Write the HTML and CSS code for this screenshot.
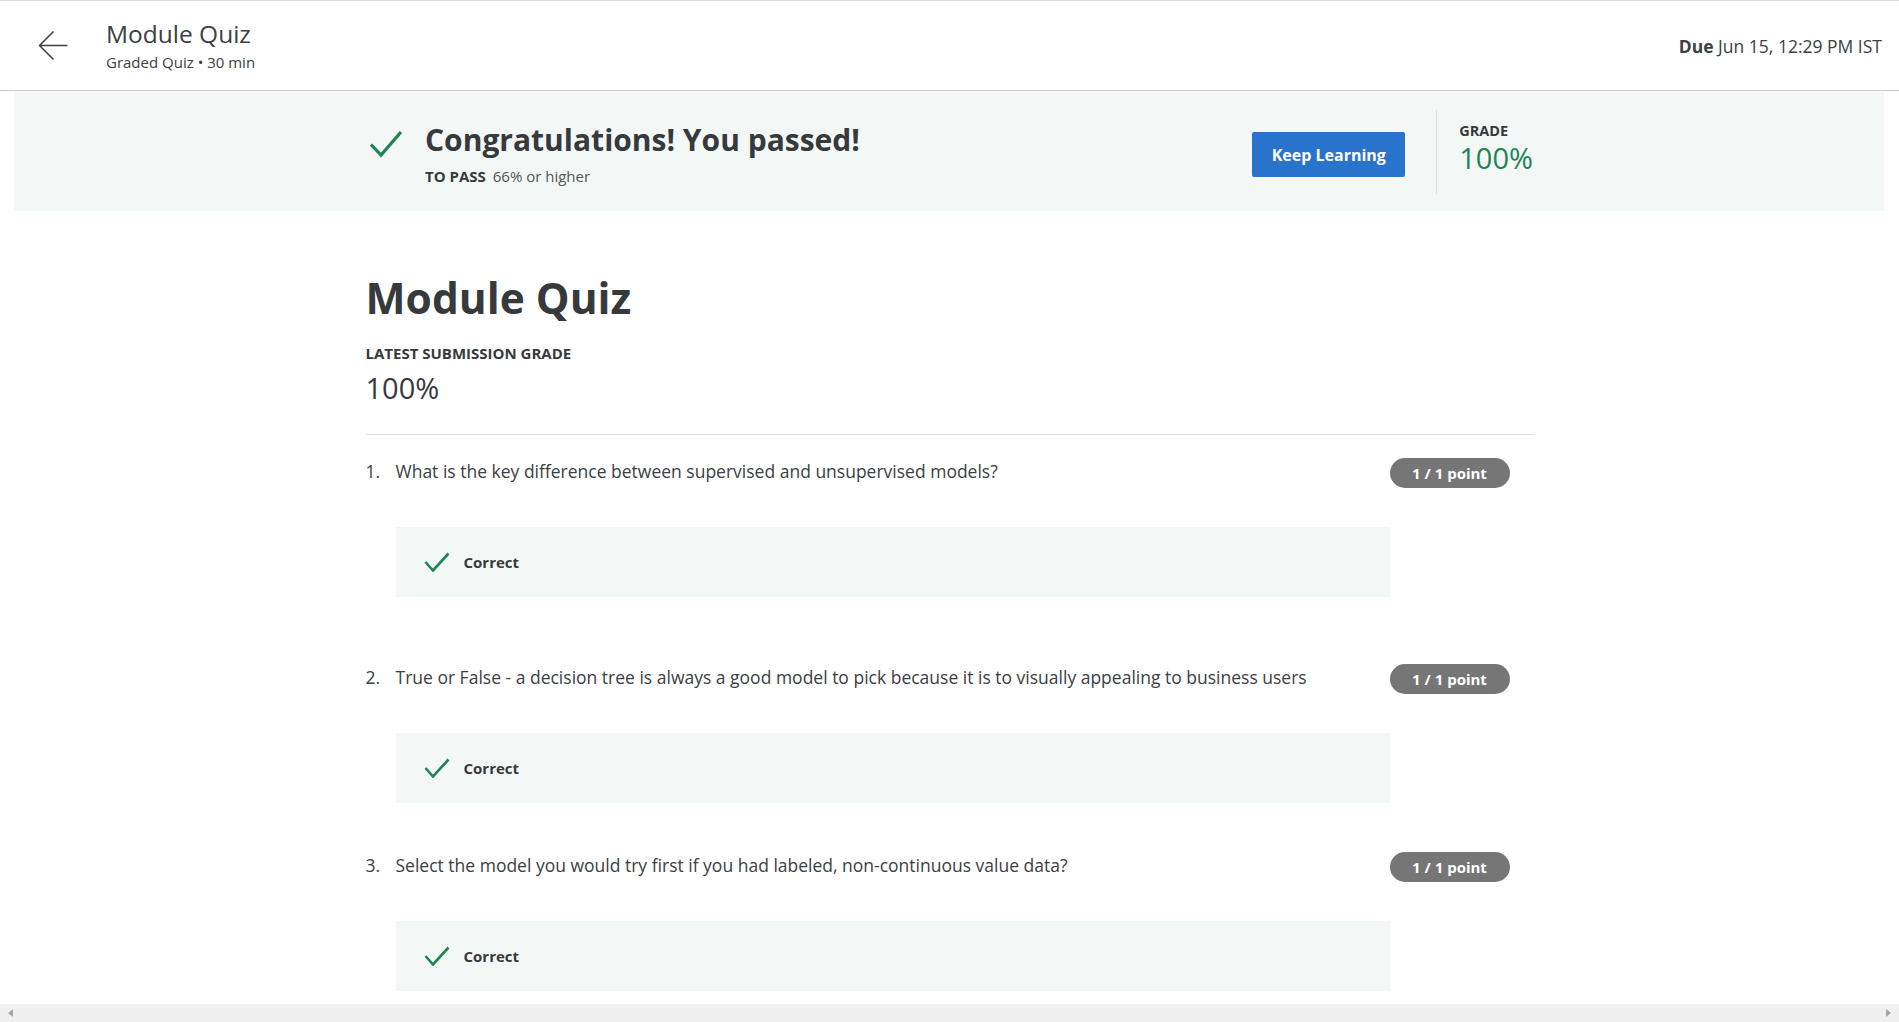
FILE: index.html
```html
<!DOCTYPE html>
<html lang="en">
<head>
<meta charset="utf-8">
<title>Module Quiz</title>
<link rel="stylesheet" href="styles.css">
</head>
<body>
<header class="topbar">
  <div class="topbar-left">
    <svg class="back-icon" width="30" height="30" viewBox="0 0 30 30" aria-hidden="true">
      <path d="M29.5 14.5 H1.5 M15.5 0.5 L1.5 14.5 L15.5 28.5" fill="none" stroke="#3c4043" stroke-width="1.5"/>
    </svg>
    <div class="topbar-titles">
      <div class="topbar-title">Module Quiz</div>
      <div class="topbar-sub">Graded Quiz • 30 min</div>
    </div>
  </div>
  <div class="due"><strong>Due</strong> Jun 15, 12:29 PM IST</div>
</header>

<section class="banner">
  <div class="banner-inner">
    <div class="banner-left">
      <svg class="banner-check" width="34" height="28" viewBox="0 0 34 28" aria-hidden="true">
        <polyline points="2,14.5 12,25 32,2" fill="none" stroke="#1f8354" stroke-width="3.2"/>
      </svg>
      <div class="banner-text">
        <div class="banner-title">Congratulations! You passed!</div>
        <div class="banner-pass"><span class="pass-label">TO PASS</span> 66% or higher</div>
      </div>
    </div>
    <div class="banner-right">
      <button class="keep-btn">Keep Learning</button>
      <div class="banner-divider"></div>
      <div class="grade-block">
        <div class="grade-label">GRADE</div>
        <div class="grade-value">100%</div>
      </div>
    </div>
  </div>
</section>

<main class="content">
  <h1 class="quiz-title">Module Quiz</h1>
  <div class="latest-label">LATEST SUBMISSION GRADE</div>
  <div class="latest-value">100%</div>
  <div class="rule"></div>

  <div class="question q1">
    <div class="q-num">1.</div>
    <div class="q-text">What is the key difference between supervised and unsupervised models?</div>
    <div class="q-badge">1 / 1 point</div>
    <div class="feedback">
      <svg class="fb-check" width="26" height="20" viewBox="0 0 26 20" aria-hidden="true">
        <polyline points="1.5,10 9,18.5 24.5,1.5" fill="none" stroke="#1f8354" stroke-width="2.6"/>
      </svg>
      <span class="fb-text">Correct</span>
    </div>
  </div>

  <div class="question q2">
    <div class="q-num">2.</div>
    <div class="q-text">True or False - a decision tree is always a good model to pick because it is to visually appealing to business users</div>
    <div class="q-badge">1 / 1 point</div>
    <div class="feedback">
      <svg class="fb-check" width="26" height="20" viewBox="0 0 26 20" aria-hidden="true">
        <polyline points="1.5,10 9,18.5 24.5,1.5" fill="none" stroke="#1f8354" stroke-width="2.6"/>
      </svg>
      <span class="fb-text">Correct</span>
    </div>
  </div>

  <div class="question q3">
    <div class="q-num">3.</div>
    <div class="q-text">Select the model you would try first if you had labeled, non-continuous value data?</div>
    <div class="q-badge">1 / 1 point</div>
    <div class="feedback">
      <svg class="fb-check" width="26" height="20" viewBox="0 0 26 20" aria-hidden="true">
        <polyline points="1.5,10 9,18.5 24.5,1.5" fill="none" stroke="#1f8354" stroke-width="2.6"/>
      </svg>
      <span class="fb-text">Correct</span>
    </div>
  </div>
</main>

<div class="hscroll">
  <span class="arrow-left"></span>
  <span class="arrow-right"></span>
</div>
</body>
</html>
```

FILE: styles.css
```css
* { box-sizing: border-box; }

html, body {
  margin: 0;
  padding: 0;
  background: #ffffff;
  font-family: "Open Sans", "Noto Sans", "Liberation Sans", sans-serif;
  color: #373a3c;
  overflow: hidden;
}

/* Top bar */
.topbar {
  height: 91px;
  border-top: 1px solid #dedede;
  border-bottom: 1px solid #c8c8c8;
  display: flex;
  align-items: center;
  justify-content: space-between;
  padding: 0 17px 0 38px;
}
.topbar-left {
  display: flex;
  align-items: center;
}
.back-icon {
  display: block;
  margin-right: 38px;
}
.topbar-title {
  font-size: 24.5px;
  line-height: 30px;
  color: #3c4043;
}
.topbar-sub {
  font-size: 15px;
  line-height: 20px;
  margin-top: 3px;
  color: #3c4043;
}
.due {
  font-size: 17.5px;
  line-height: 24px;
  color: #3c4043;
}
.due strong { font-weight: 700; }

/* Banner */
.banner {
  margin: 1px 15px 0 14px;
  height: 119px;
  background: #f3f8f7;
  display: flex;
  align-items: center;
}
.banner-inner {
  width: 1168px;
  margin: 0 auto;
  display: flex;
  align-items: center;
  justify-content: space-between;
}
.banner-left {
  display: flex;
  align-items: flex-start;
  padding-left: 4px;
}
.banner-check {
  display: block;
  margin-top: 13px;
  margin-right: 22px;
}
.banner-text {
  padding-top: 2px;
}
.banner-title {
  font-size: 30px;
  line-height: 42px;
  font-weight: 700;
  color: #373a3c;
}
.banner-pass {
  margin-top: 5px;
  font-size: 15px;
  line-height: 20px;
  color: #545454;
}
.pass-label {
  font-weight: 700;
  color: #373a3c;
  margin-right: 3px;
}
.banner-right {
  display: flex;
  align-items: center;
}
.keep-btn {
  font-family: inherit;
  font-size: 16px;
  font-weight: 700;
  color: #ffffff;
  background: #2a73cc;
  border: none;
  border-radius: 2px;
  width: 153px;
  height: 45px;
  margin-top: 6px;
  padding: 0;
}
.banner-divider {
  width: 1px;
  height: 84px;
  background: #dcdcdc;
  margin: 0 22px 0 31px;
}
.grade-block {
  padding-bottom: 6px;
}
.grade-label {
  font-size: 14.5px;
  line-height: 18px;
  font-weight: 700;
  color: #373a3c;
}
.grade-value {
  font-size: 29px;
  line-height: 36px;
  color: #1f8354;
}

/* Main content */
.content {
  width: 1168px;
  margin: 0 auto;
  padding-top: 61px;
}
.quiz-title {
  margin: 0;
  font-size: 42.5px;
  line-height: 52px;
  font-weight: 700;
  color: #373a3c;
}
.latest-label {
  margin-top: 19px;
  font-size: 15px;
  line-height: 20px;
  font-weight: 700;
  color: #373a3c;
}
.latest-value {
  margin-top: 7px;
  font-size: 29px;
  line-height: 36px;
  color: #373a3c;
}
.rule {
  margin-top: 28px;
  height: 1px;
  background: #e1e1e1;
}

/* Questions */
.question {
  display: grid;
  grid-template-columns: 30px 994px 120px;
  align-items: center;
}
.q1 { margin-top: 23px; }
.q2 { margin-top: 67px; }
.q3 { margin-top: 49px; }
.q-num, .q-text {
  font-size: 17.5px;
  line-height: 24px;
  color: #3c4043;
  margin-bottom: 4px;
}
.q-badge {
  height: 30px;
  border-radius: 15px;
  background: #767676;
  color: #ffffff;
  font-size: 15px;
  font-weight: 700;
  display: flex;
  align-items: center;
  justify-content: center;
}
.feedback {
  grid-column: 2;
  margin-top: 39px;
  height: 70px;
  background: #f3f8f7;
  display: flex;
  align-items: center;
  padding-left: 28px;
}
.fb-check {
  display: block;
  margin-right: 14px;
}
.fb-text {
  font-size: 15px;
  font-weight: 700;
  color: #373a3c;
}

/* Horizontal scrollbar strip (overlay at the bottom of the viewport) */
.hscroll {
  position: fixed;
  left: 0;
  right: 0;
  bottom: 0;
  height: 18px;
  background: #f0f0f0;
}
.arrow-left, .arrow-right {
  position: absolute;
  top: 5px;
  width: 0;
  height: 0;
  border-top: 4px solid transparent;
  border-bottom: 4px solid transparent;
}
.arrow-left {
  left: 8px;
  border-right: 5px solid #a3a3a3;
}
.arrow-right {
  right: 8px;
  border-left: 5px solid #a3a3a3;
}
```
